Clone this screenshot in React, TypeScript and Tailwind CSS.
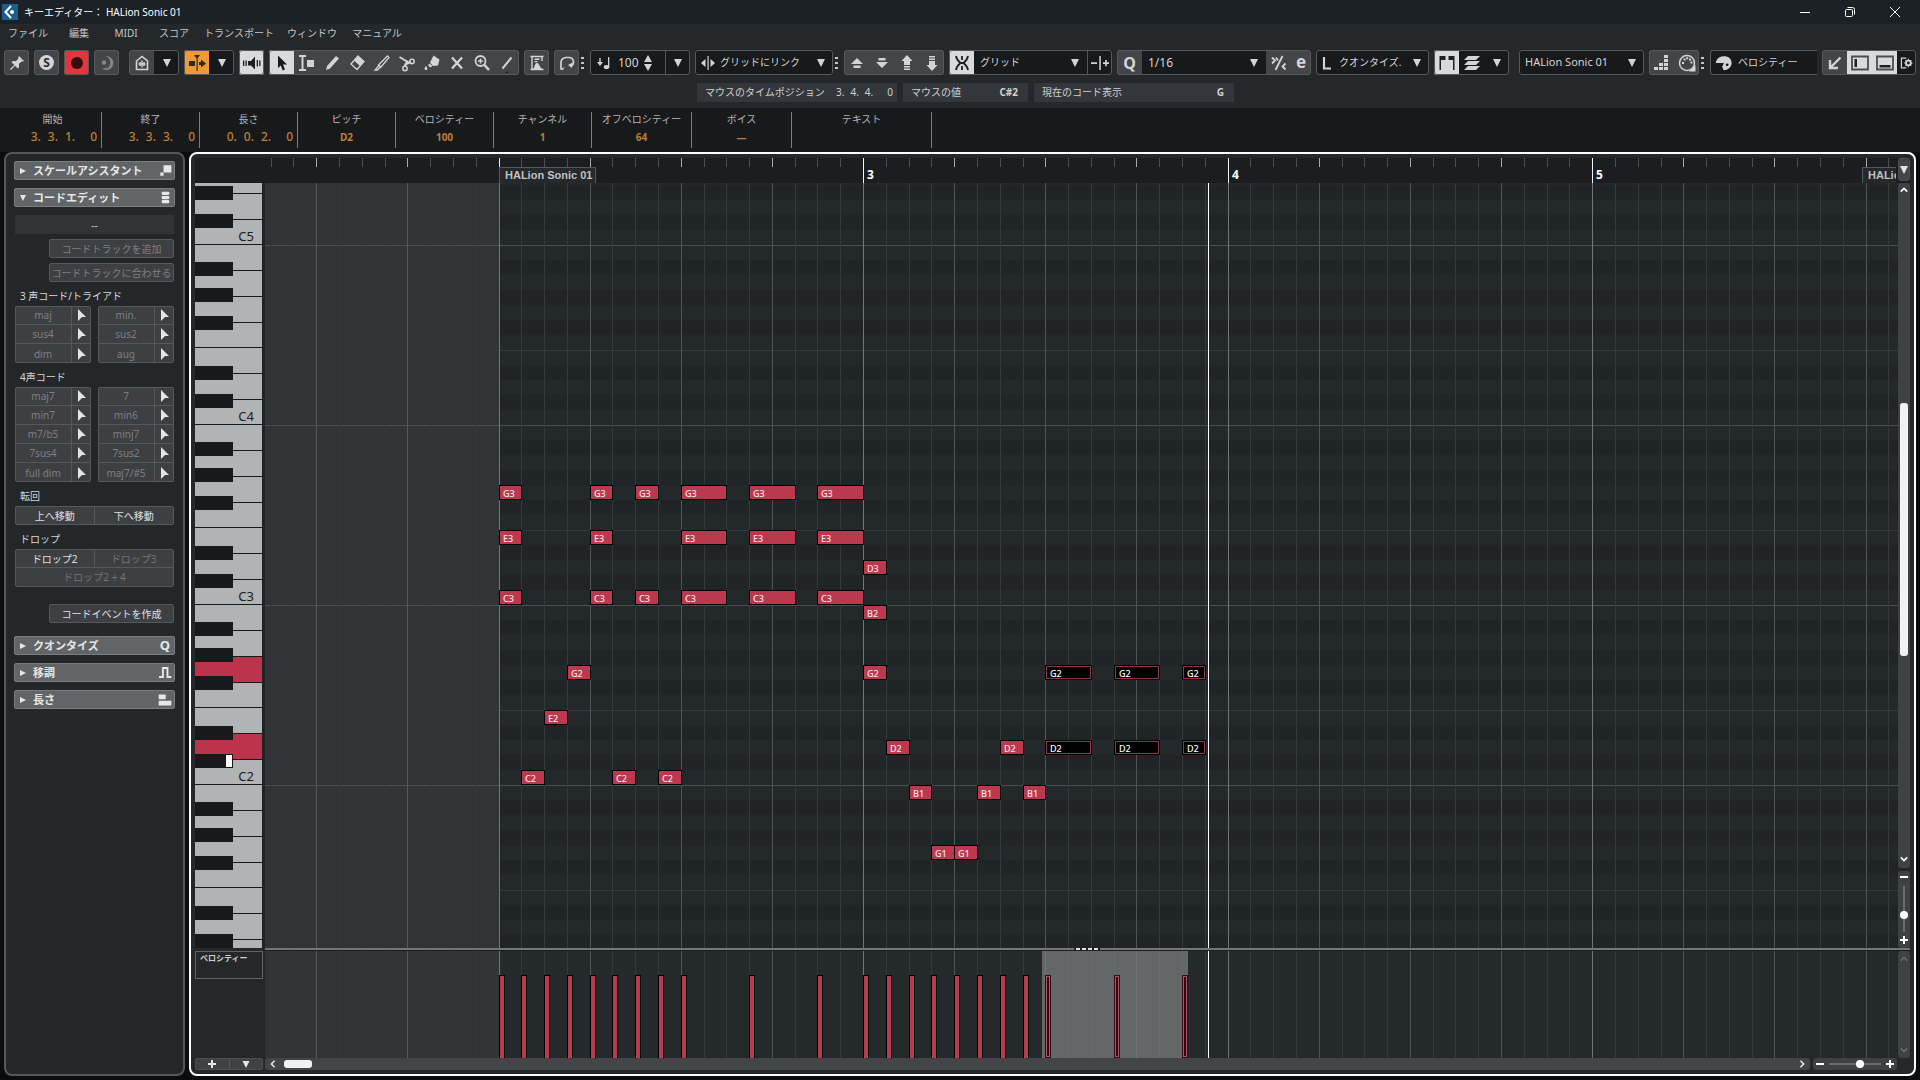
import React from 'react';
import clsx from 'clsx';

const STEP = 22.785; // width of a 1/16
const ORIGIN = 234; // where bar 2 starts on the canvas

const xAt = (step: number) => Math.floor(ORIGIN + STEP * step);

interface Note {
  name: string;
  pitch: number; // semitones above C3
  steps: number[];
  length: number;
  selected?: boolean;
}

const notes: Note[] = [
  { name: 'G3', pitch: 7, steps: [0, 4, 6], length: 1 },
  { name: 'G3', pitch: 7, steps: [8, 11, 14], length: 2 },
  { name: 'E3', pitch: 4, steps: [0, 4], length: 1 },
  { name: 'E3', pitch: 4, steps: [8, 11, 14], length: 2 },
  { name: 'C3', pitch: 0, steps: [0, 4, 6], length: 1 },
  { name: 'C3', pitch: 0, steps: [8, 11, 14], length: 2 },
  { name: 'D3', pitch: 2, steps: [16], length: 1 },
  { name: 'B2', pitch: -1, steps: [16], length: 1 },
  { name: 'G2', pitch: -5, steps: [3, 16], length: 1 },
  { name: 'E2', pitch: -8, steps: [2], length: 1 },
  { name: 'D2', pitch: -10, steps: [17, 22], length: 1 },
  { name: 'C2', pitch: -12, steps: [1, 5, 7], length: 1 },
  { name: 'B1', pitch: -13, steps: [18, 21, 23], length: 1 },
  { name: 'G1', pitch: -17, steps: [19, 20], length: 1 },
  { name: 'G2', pitch: -5, steps: [24, 27], length: 2, selected: true },
  { name: 'G2', pitch: -5, steps: [30], length: 1, selected: true },
  { name: 'D2', pitch: -10, steps: [24, 27], length: 2, selected: true },
  { name: 'D2', pitch: -10, steps: [30], length: 1, selected: true },
];

const velocities = [0, 1, 2, 3, 4, 5, 6, 7, 8, 11, 14, 16, 17, 18, 19, 20, 21, 22, 23];
const selectedVelocities = [24, 27, 30];

const menus = [
  { label: 'ファイル', width: 'w-[52px]' },
  { label: '編集', width: 'w-[50px]' },
  { label: 'MIDI', width: 'w-[44px]' },
  { label: 'スコア', width: 'w-[52px]' },
  { label: 'トランスポート', width: 'w-[78px]' },
  { label: 'ウィンドウ', width: 'w-[68px]' },
  { label: 'マニュアル', width: 'w-[62px]' },
];

const infoCells = [
  { label: '開始', time: ['3.', '3.', '1.', '0'], width: 'w-[98px]' },
  { label: '終了', time: ['3.', '3.', '3.', '0'], width: 'w-[98px]' },
  { label: '長さ', time: ['0.', '0.', '2.', '0'], width: 'w-[98px]' },
  { label: 'ピッチ', value: 'D2', width: 'w-[98px]' },
  { label: 'ベロシティー', value: '100', width: 'w-[98px]' },
  { label: 'チャンネル', value: '1', width: 'w-[98px]' },
  { label: 'オフベロシティー', value: '64', width: 'w-[100px]' },
  { label: 'ボイス', value: '—', width: 'w-[100px]' },
  { label: 'テキスト', value: '', width: 'w-[140px]' },
];

/* ---------- icons ---------- */

const Icon: React.FC<{ children: React.ReactNode; className?: string }> = ({ children, className = 'h-5 w-5' }) => (
  <svg viewBox="0 0 20 20" aria-hidden="true" className={clsx('shrink-0', className)} fill="currentColor">
    {children}
  </svg>
);

const line = { fill: 'none', stroke: 'currentColor', strokeWidth: 1.8 };

const PinIcon = () => (
  <Icon>
    <path d="M12 3l5 5-1.500.8-1-.3-2.600 2.600.2 3.200-1.300 1.200-2.800-2.800L4 17l-1-1 4.300-4-2.800-2.800 1.200-1.200 3.200.2 2.600-2.600-.3-1z" />
  </Icon>
);
const MoonIcon = () => (
  <Icon className="h-5 w-5 text-[#85878a]">
    <path d="M9 3a7 7 0 1 1-4 12.500A6.800 6.800 0 0 0 9 3z" />
    <circle cx="7" cy="9.500" r="2.200" />
    <path d="M9.500 4.500a6 6 0 0 1 0 10.500" fill="none" stroke="#46484b" strokeWidth="1.500" />
  </Icon>
);
const HouseIcon = () => (
  <Icon>
    <path d="M4.500 8L10 3.500 15.500 8v8.500h-11z" {...line} strokeWidth={1.600} />
    <path d="M10 7.500v7M6.500 11h7M8 9v4M12 9v4" {...line} strokeWidth={1.400} />
  </Icon>
);
const AutoScrollIcon = () => (
  <Icon className="h-5 w-5 text-[#2a2a2a]">
    <path d="M2 8h6v5H2zM9.500 5.500h1.200V18H9.500zM7 2h6l-3 4zM12 9h2V6.500l5 4-5 4V12h-2z" />
  </Icon>
);
const SpeakerIcon = () => (
  <Icon className="h-5 w-5 text-[#1d1f21]">
    <path d="M6 8h3l4-4.500v13L9 12.500H6zM1 7.500h1.300v5.500H1zM3.500 7.500h1.300v5.500H3.500zM14.700 7h1.300v6.500h-1.300zM17.200 7.500h1.300v5.500h-1.300z" />
  </Icon>
);
const CursorIcon = () => (
  <Icon>
    <path d="M6 2.500l9 9h-4l2 5-2.200.9-2-4.900L6 15z" />
  </Icon>
);
const RangeIcon = () => (
  <Icon>
    <path d="M2 3h7M2 17h7M5.500 3v14" {...line} strokeWidth={2} />
    <path d="M10 7h7v7h-7z" />
  </Icon>
);
const PencilIcon = () => (
  <Icon>
    <path d="M14 3l3 2.500L8 15.500 4 17l1-4z" />
  </Icon>
);
const EraserIcon = () => (
  <Icon>
    <path d="M11 3l6 5.500-7 8-6-5.500z" fill="none" stroke="currentColor" strokeWidth="1.300" />
    <path d="M11 3l6 5.500-4 4.500-6-5.500z" />
  </Icon>
);
const KnifeIcon = () => (
  <Icon>
    <path d="M15.500 3l1.500 1.500-8 9.500-2.500-2zM7 12.500l1.500 1.500-3 3H3z" {...line} strokeWidth={1.300} />
  </Icon>
);
const ScissorsIcon = () => (
  <Icon>
    <path d="M2.500 4l10 6M7.500 13.500l3-6" {...line} strokeWidth={2} />
    <circle cx="15" cy="8.500" r="2.200" {...line} strokeWidth={1.500} />
    <circle cx="8" cy="15.500" r="2.200" {...line} strokeWidth={1.500} />
    <path d="M9 11.500l5-2.500" {...line} />
  </Icon>
);
const GlueIcon = () => (
  <Icon>
    <path d="M11.500 2.500l6 4-1.500 6-5 .5-3-3.500zM7.500 10.500l3 2.500-2 1.500-2.500-2zM4 13c1.800 1.800 1.800 4 0 4s-1.800-2.200 0-4z" />
  </Icon>
);
const MuteIcon = () => (
  <Icon>
    <path d="M5 4.500l10 11M15 4.500l-10 11" {...line} strokeWidth={2.300} />
  </Icon>
);
const ZoomIcon = () => (
  <Icon>
    <circle cx="8.500" cy="8" r="5" {...line} />
    <path d="M12 11.500l5 5.500" {...line} strokeWidth={2.600} />
    <path d="M6 8h5M8.500 5.500v5" {...line} strokeWidth={1.400} />
  </Icon>
);
const LineIcon = () => (
  <Icon>
    <path d="M14.500 4.500l-9 11" {...line} strokeWidth={2} />
    <path d="M7.500 21l2.500-3 2.500 3z" fill="#1d1f21" />
  </Icon>
);
const StretchIcon = () => (
  <Icon>
    <path d="M3.500 3.500h13M3.500 16.500h13M5 3v14M15 3v5" {...line} strokeWidth={1.400} />
    <path d="M5 16.500C9 14 7 10 10 10s1.500 4 6 6.500zM7.500 5.500h5V7h-5zM7.500 8h3v1.200h-3z" />
  </Icon>
);
const LoopIcon = () => (
  <Icon>
    <path d="M4 16V9.500a5 5 0 0 1 5-5h3a4.500 4.500 0 0 1 2 8.500" {...line} strokeWidth={1.700} />
    <path d="M2.500 16.500l5-2.500-1.500 3zM15.500 9.500l-.5 5.500-4-3z" />
  </Icon>
);
const StepIcon: React.FC<{ d: string }> = ({ d }) => (
  <Icon>
    <path d={d} />
  </Icon>
);
const SnapIcon = () => (
  <Icon className="h-5 w-5 text-[#1d1f21]">
    <path d="M4 3c.5 3 2 5 4.500 7C6 12 4.500 14 4 17M16 3c-.5 3-2 5-4.500 7 2.500 2 4 4 4.500 7M10 3v4M10 13v4M7.500 10h5" {...line} />
  </Icon>
);
const VelocityIcon = () => (
  <Icon className="h-[18px] w-[18px]">
    <path d="M1 8.500C2.500 4.500 6 2.500 10 2.500c5 0 8.500 3 8.500 7.500s-4 8-9 8L8 14l2-4H1z" />
    <circle cx="13.500" cy="12" r="1.500" fill="#17191a" />
  </Icon>
);
const Arrow: React.FC<{ className?: string }> = ({ className = 'h-2 w-2' }) => (
  <svg viewBox="0 0 10 10" aria-hidden="true" className={clsx('shrink-0', className)} fill="currentColor">
    <path d="M0 0h10L5 10z" />
  </svg>
);
const Chevron: React.FC<{ d: string }> = ({ d }) => (
  <svg viewBox="0 0 10 10" aria-hidden="true" className="h-2 w-2" fill="none" stroke="currentColor" strokeWidth="2">
    <path d={d} />
  </svg>
);

/* ---------- toolbar ---------- */

interface ToolProps {
  label: string;
  children: React.ReactNode;
  className?: string;
  width?: string;
}

const Tool: React.FC<ToolProps> = ({ label, children, className, width = 'w-[25px]' }) => (
  <button
    aria-label={label}
    className={clsx('flex h-full shrink-0 items-center justify-center', width, className)}
  >
    {children}
  </button>
);

const Box: React.FC<{ children: React.ReactNode; className?: string }> = ({ children, className }) => (
  <div className={clsx('flex h-[25px] shrink-0 overflow-hidden rounded-[3px] outline outline-1 -outline-offset-1 outline-[#56585b]', className)}>
    {children}
  </div>
);

const Dropdown: React.FC<{ label: string; value: string; inset?: string }> = ({ label, value, inset = 'pl-[6px]' }) => (
  <div className="relative flex h-full min-w-0 flex-1 items-center">
    <select
      aria-label={label}
      defaultValue={value}
      className={clsx('h-full w-full appearance-none bg-transparent outline-none', inset)}
    >
      <option>{value}</option>
    </select>
    <Arrow className="pointer-events-none absolute right-2 h-2 w-2" />
  </div>
);

const Dots = () => (
  <div className="flex w-[3px] shrink-0 flex-col gap-[3px]">
    <i className="h-[2px] bg-[#c5c6c8]" />
    <i className="h-[2px] bg-[#c5c6c8]" />
    <i className="h-[2px] bg-[#c5c6c8]" />
  </div>
);

const Toolbar = () => (
  <div className="flex h-[25px] items-center gap-[5px] pl-1 text-[12px] text-[#d3d4d5]">
    <Box className="bg-[#434548]"><Tool label="固定"><PinIcon /></Tool></Box>
    <Box className="bg-[#434548]">
      <Tool label="ソロ">
        <span className="flex h-[15px] w-[15px] items-center justify-center rounded-full bg-[#d3d4d5] text-[12px] font-bold text-[#2b2d2f]">S</span>
      </Tool>
    </Box>
    <Box className="bg-[#e2353d]">
      <Tool label="録音"><span className="h-3 w-3 rounded-full bg-[#350d10]" /></Tool>
    </Box>
    <Box className="bg-[#434548]"><Tool label="レトロスペクティブ"><MoonIcon /></Tool></Box>
    <Box className="ml-[5px] bg-[#17191a]">
      <Tool label="エディター" className="bg-[#434548]"><HouseIcon /></Tool>
      <Tool label="エディター設定"><Arrow /></Tool>
    </Box>
    <Box className="bg-[#17191a]">
      <Tool label="自動スクロール" className="bg-[#ef9a35]"><AutoScrollIcon /></Tool>
      <Tool label="自動スクロール設定"><Arrow /></Tool>
    </Box>
    <Box className="bg-[#d9dadb]"><Tool label="試聴"><SpeakerIcon /></Tool></Box>
    <Box className="bg-[#434548]">
      <Tool label="選択" className="bg-[#d9dadb] text-[#17191a]"><CursorIcon /></Tool>
      <Tool label="範囲"><RangeIcon /></Tool>
      <Tool label="鉛筆"><PencilIcon /></Tool>
      <Tool label="消しゴム"><EraserIcon /></Tool>
      <Tool label="トリム"><KnifeIcon /></Tool>
      <Tool label="分割"><ScissorsIcon /></Tool>
      <Tool label="のり"><GlueIcon /></Tool>
      <Tool label="ミュート"><MuteIcon /></Tool>
      <Tool label="ズーム"><ZoomIcon /></Tool>
      <Tool label="ライン"><LineIcon /></Tool>
    </Box>
    <Box className="bg-[#434548]"><Tool label="伸縮"><StretchIcon /></Tool></Box>
    <Box className="-mr-[3px] bg-[#434548]"><Tool label="ループ"><LoopIcon /></Tool></Box>
    <Dots />
    <Box className="ml-[1px] w-[100px] items-center bg-[#17191a]">
      <Icon className="ml-1 h-5 w-5">
        <path d="M3 9h6l-3 4zM5.300 5h1.400v5H5.300zM14 4h1.300v10H14z" />
        <ellipse cx="12.500" cy="14" rx="2.800" ry="2" />
      </Icon>
      <input aria-label="ベロシティー値" defaultValue="100" className="ml-1 w-[26px] bg-transparent outline-none" />
      <svg viewBox="0 0 8 16" aria-hidden="true" className="h-4 w-2" fill="currentColor"><path d="M0 7l4-7 4 7zM0 9h8l-4 7z" /></svg>
      <Tool label="ベロシティー設定" className="ml-auto border-l border-[#56585b]"><Arrow /></Tool>
    </Box>
    <Box className="-mr-[3px] w-[138px] items-center bg-[#17191a] text-[10px]">
      <Icon className="ml-[3px] h-5 w-5"><path d="M9.500 3h1.200v14H9.500zM7.500 6v8L3 10zM12.500 6v8l4.500-4z" /></Icon>
      <Dropdown label="長さ" value="グリッドにリンク" inset="pl-[2px]" />
    </Box>
    <Dots />
    <Box className="ml-[1px] bg-[#434548]">
      <Tool label="上へ"><StepIcon d="M10 5l6 6H4zM6.500 12.500h7V15h-7z" /></Tool>
      <Tool label="下へ"><StepIcon d="M4 9h12l-6 6zM6.500 5h7v2.500h-7z" /></Tool>
      <Tool label="1 オクターブ上へ"><StepIcon d="M10 2l5.500 6H13v4H7V8H4.500zM7 13h6v1.500H7zM7 15.500h6V17H7z" /></Tool>
      <Tool label="1 オクターブ下へ"><StepIcon d="M10 18l5.500-6H13V8H7v4H4.500zM7 5.500h6V7H7zM7 3h6v1.500H7z" /></Tool>
    </Box>
    <Box className="w-[163px] bg-[#17191a] text-[10px]">
      <Tool label="スナップ" className="bg-[#d9dadb]"><SnapIcon /></Tool>
      <Dropdown label="スナップタイプ" value="グリッド" />
      <Tool label="相対グリッド" className="border-l border-[#56585b]">
        <Icon><path d="M1 9.300h6v1.600H1zM9.300 3h1.500v14H9.300zM13 9.300h6v1.600h-6zM15.200 7h1.600v6.200h-1.600z" /></Icon>
      </Tool>
    </Box>
    <Box className="w-[194px] bg-[#17191a]">
      <Tool label="クオンタイズを適用" className="bg-[#434548] text-[16px] font-bold">Q</Tool>
      <Dropdown label="クオンタイズ値" value="1/16" />
      <Tool label="ソフトクオンタイズ" className="bg-[#434548]">
        <Icon>
          <path d="M13.500 3l-7 14M3 4.500L6 7.500l-3 3M7 4.500l2 3M16.500 10.500l-3 3 3 3" {...line} />
        </Icon>
      </Tool>
      <Tool label="クオンタイズパネル" width="w-[20px]" className="bg-[#434548] pb-[2px] text-[17px] font-bold">e</Tool>
    </Box>
    <Box className="w-[113px] items-center bg-[#17191a] text-[10px]">
      <Icon className="ml-[1px] h-5 w-[22px]"><path d="M6 4v11.500h7" {...line} strokeWidth={2.200} /></Icon>
      <Dropdown label="長さクオンタイズ" value="クオンタイズ." inset="pl-0" />
    </Box>
    <Box className="bg-[#17191a]">
      <Tool label="パート境界" className="bg-[#d9dadb] text-[#1d1f21]">
        <Icon><path d="M2.500 3h6v4H4v10H2.500zM11.500 3h6v14H16V7h-4.500z" /></Icon>
      </Tool>
      <Tool label="レイヤー">
        <Icon><path d="M6 3h12l-4 4H2zM6 8h12l-4 4H2zM6 13h12l-4 4H2z" /></Icon>
      </Tool>
      <Tool label="レイヤー設定"><Arrow /></Tool>
    </Box>
    <Box className="ml-[5px] w-[125px] bg-[#17191a] text-[11px]"><Dropdown label="パート" value="HALion Sonic 01" /></Box>
    <Box className="-mr-[3px] bg-[#434548]">
      <Tool label="ステップ入力">
        <Icon><path d="M2 14h4v3H2zM7 14h4v3H7zM12 14h4v3h-4zM7 10h4v3H7zM12 10h4v3h-4zM12 6h4v3h-4zM12 2h4v3h-4z" /></Icon>
      </Tool>
      <Tool label="MIDI 入力">
        <Icon>
          <circle cx="10" cy="10" r="7.500" {...line} strokeWidth={1.500} />
          <path d="M5 9h2v2H5zM6.500 5.500h2v2h-2zM9.200 4.300h2v2h-2zM12 5.500h2v2h-2zM13.500 8.500h2v2h-2zM18.500 12v6.500H12z" />
        </Icon>
      </Tool>
    </Box>
    <Dots />
    <button className="ml-[1px] flex h-[25px] w-[107px] shrink-0 items-center gap-[5px] rounded-l-[3px] border-y border-l border-[#56585b] bg-[#17191a] pl-1 text-[10px] whitespace-nowrap">
      <VelocityIcon />
      ベロシティー
    </button>
    <Box className="bg-[#17191a]">
      <Tool label="プロジェクトウィンドウに戻る" className="bg-[#434548]">
        <Icon><path d="M15.500 4.500L6 14M5 7v8h8" {...line} strokeWidth={2.400} /></Icon>
      </Tool>
      <Tool label="左ゾーン" className="bg-[#d9dadb] text-[#4b4d50]">
        <Icon><path d="M2 3.500h16v13H2z" {...line} /><path d="M4.500 6H7v8H4.500z" fill="#1d1f21" /></Icon>
      </Tool>
      <Tool label="下ゾーン" className="bg-[#d9dadb] text-[#4b4d50]">
        <Icon><path d="M2 3.500h16v13H2z" {...line} /><path d="M4.500 12h11v2.500h-11z" fill="#1d1f21" /></Icon>
      </Tool>
      <Tool label="レイアウト設定" width="w-[19px]">
        <Icon className="h-[14px] w-[14px]">
          <path d="M9 3H2v14h7" {...line} />
          <circle cx="12" cy="10" r="3.500" {...line} strokeWidth={2.500} />
          <path d="M12 4v12M6 10h12M8 6l8 8M16 6l-8 8" stroke="currentColor" strokeWidth="1.600" />
          <circle cx="12" cy="10" r="2" fill="#17191a" />
        </Icon>
      </Tool>
    </Box>
  </div>
);

/* ---------- left inspector ---------- */

const SectionHeader: React.FC<{ title: string; open?: boolean; children: React.ReactNode }> = ({ title, open, children }) => (
  <button
    aria-expanded={!!open}
    className="flex h-[19px] w-full items-center rounded-[2px] border border-[#7b7e80] bg-[#626567] pr-[2px] pl-[5px] text-[11px] font-bold text-[#e6e7e8]"
  >
    <Arrow className={clsx('h-[6px] w-[6px]', !open && '-rotate-90')} />
    <span className="ml-[7px]">{title}</span>
    <span className="ml-auto flex">{children}</span>
  </button>
);

const chordButton = 'border border-[#56585a] bg-[#3d3f42]';

const ChordColumn: React.FC<{ chords: string[] }> = ({ chords }) => (
  <div className="flex w-[76px] flex-col divide-y divide-[#56585a] rounded-[2px] bg-[#3d3f42] outline outline-1 -outline-offset-1 outline-[#56585a]">
    {chords.map((chord) => (
      <div key={chord} className="flex h-[19px] divide-x divide-[#56585a]">
        <button className="flex-1 text-[#7d7f82]">{chord}</button>
        <button aria-label={`${chord} を適用`} className="flex w-[19px] items-center justify-center text-[#e4e5e6]">
          <svg viewBox="0 0 9 12" aria-hidden="true" className="h-3 w-[9px]" fill="currentColor">
            <path d="M1 0l8 8H5l-4 4z" />
          </svg>
        </button>
      </div>
    ))}
  </div>
);

const GroupLabel: React.FC<{ children: React.ReactNode }> = ({ children }) => (
  <h3 className="flex h-6 items-center pt-[3px] pl-[5px] text-[#d6d7d8]">{children}</h3>
);

const Inspector = () => (
  <aside className="flex w-[181px] shrink-0 flex-col rounded-lg border-2 border-[#55585a] bg-[#23272a] px-2 pt-[7px] text-[10px] leading-none">
    <SectionHeader title="スケールアシスタント">
      <Icon className="h-[13px] w-[13px]"><path d="M7 2h12v11H7zM2 13h5v5H2z" /></Icon>
    </SectionHeader>
    <div className="h-2" />
    <SectionHeader title="コードエディット" open>
      <Icon className="h-[13px] w-[13px]">
        <rect x="4" y="1" width="12" height="5" rx="2" />
        <rect x="4" y="7.500" width="12" height="5" rx="2" />
        <rect x="4" y="14" width="12" height="5" rx="2" />
      </Icon>
    </SectionHeader>
    <div className="flex flex-col px-[1px] pt-2 pb-[13px]">
      <div className="flex h-[19px] items-center justify-center bg-[#313336] text-[#d6d7d8]">--</div>
      <button className={clsx(chordButton, 'mt-[5px] ml-[34px] h-[19px] rounded-[2px] text-[#7d7f82]')}>コードトラックを追加</button>
      <button className={clsx(chordButton, 'mt-[5px] ml-[34px] h-[19px] rounded-[2px] text-[#7d7f82]')}>コードトラックに合わせる</button>
      <GroupLabel>3 声コード/トライアド</GroupLabel>
      <div className="flex justify-between">
        <ChordColumn chords={['maj', 'sus4', 'dim']} />
        <ChordColumn chords={['min.', 'sus2', 'aug']} />
      </div>
      <GroupLabel>4声コード</GroupLabel>
      <div className="flex justify-between">
        <ChordColumn chords={['maj7', 'min7', 'm7/b5', '7sus4', 'full dim']} />
        <ChordColumn chords={['7', 'min6', 'minj7', '7sus2', 'maj7/#5']} />
      </div>
      <GroupLabel>転回</GroupLabel>
      <div className="grid h-[19px] grid-cols-2 divide-x divide-[#56585a] rounded-[2px] border border-[#56585a] bg-[#3d3f42] text-[#e0e1e2]">
        <button>上へ移動</button>
        <button>下へ移動</button>
      </div>
      <GroupLabel>ドロップ</GroupLabel>
      <div className="rounded-[2px] border border-[#56585a] bg-[#3d3f42]">
        <div className="grid h-[18px] grid-cols-2 divide-x divide-[#56585a] border-b border-[#56585a]">
          <button className="text-[#e0e1e2]">ドロップ2</button>
          <button className="text-[#727477]">ドロップ3</button>
        </div>
        <button className="h-[18px] w-full text-[#727477]">ドロップ2 + 4</button>
      </div>
      <button className={clsx(chordButton, 'mt-[17px] ml-[34px] h-[19px] rounded-[2px] text-[#e0e1e2]')}>コードイベントを作成</button>
    </div>
    <div className="flex flex-col gap-2">
      <SectionHeader title="クオンタイズ"><span className="pr-[2px] text-[13px]">Q</span></SectionHeader>
      <SectionHeader title="移調">
        <Icon className="h-[13px] w-[13px]"><path d="M0 17h6V3h7v14h6" {...line} strokeWidth={3} /></Icon>
      </SectionHeader>
      <SectionHeader title="長さ">
        <Icon className="h-[14px] w-[14px]"><path d="M1 2h10v7H1zM1 11h18v7H1z" /></Icon>
      </SectionHeader>
    </div>
  </aside>
);

/* ---------- keyboard ---------- */

const whiteKeys = [
  { name: 'B', height: 'h-[26px]' },
  { name: 'A', height: 'h-[26px]' },
  { name: 'G', height: 'h-[26px]' },
  { name: 'F', height: 'h-[25px]' },
  { name: 'E', height: 'h-[26px]' },
  { name: 'D', height: 'h-[26px]' },
  { name: 'C', height: 'h-[25px]' },
];
const blackKeys = ['top-[17px]', 'top-[43px]', 'top-[71px]', 'top-[121px]', 'top-[149px]'];

const Octave: React.FC<{ label?: string; pressed?: string[] }> = ({ label, pressed = [] }) => (
  <div className="relative shrink-0">
    {whiteKeys.map((key) => (
      <div
        key={key.name}
        className={clsx(
          'flex items-end justify-end border-b border-[#17191a] pr-2 text-[13px] leading-[16px] text-[#1b1c1d]',
          key.height,
          pressed.includes(key.name) ? 'bg-[#bb344c]' : 'bg-[#b2b3b5]',
        )}
      >
        {key.name === 'C' && label}
      </div>
    ))}
    {blackKeys.map((top) => (
      <div key={top} className={clsx('absolute left-0 h-[14px] w-[38px] bg-[#17191a]', top)} />
    ))}
    {pressed.length > 0 && <div className="absolute top-[150px] left-[31px] h-3 w-[6px] bg-white" />}
  </div>
);

const Keyboard = () => (
  <div className="h-full w-[67px] shrink-0 overflow-hidden">
    <div className="-mt-[118px] flex flex-col">
      <Octave label="C5" />
      <Octave label="C4" />
      <Octave label="C3" />
      <Octave label="C2" pressed={['G', 'D']} />
      <Octave />
    </div>
  </div>
);

/* ---------- canvas ---------- */

const steps = Array.from({ length: 160 }, (_, i) => i - 10);

const stepColor = (step: number) => {
  if (step < 0) return step % 4 === 0 ? '#56585a' : '#353639';
  if (step % 16 === 0) return '#727678';
  return step % 4 === 0 ? '#505456' : '#34393b';
};

const GridLines = () => (
  <g shapeRendering="crispEdges">
    {steps.map((step) => (
      <rect key={step} x={xAt(step)} y={0} width={1} height="100%" fill={stepColor(step)} />
    ))}
  </g>
);

const darkRows = [1, 3, 5, 8, 10]; // A#, G#, F#, D#, C# counted from B

const RollGrid = () => (
  <svg aria-hidden="true" className="absolute inset-0 h-full w-full bg-[#23282b]">
    {[-118, 62, 242, 422, 602].map((top) => (
      <g key={top} shapeRendering="crispEdges">
        {darkRows.map((row) => (
          <rect key={row} x={0} y={top + row * 15} width="100%" height={15} fill="#202427" />
        ))}
        <rect x={0} y={top + 105} width="100%" height={1} fill="#33383a" />
      </g>
    ))}
    <rect x={0} y={0} width={ORIGIN} height="100%" fill="#323336" />
    {[62, 242, 422, 602].map((y) => (
      <rect key={y} x={0} y={y} width="100%" height={1} fill="#4a4e50" />
    ))}
    <GridLines />
  </svg>
);

const Notes = () => (
  <>
    {notes.flatMap((note) =>
      note.steps.map((step) => (
        <div
          key={`${note.name}-${step}`}
          className={clsx(
            'absolute flex h-[15px] items-center border border-black text-[9px] leading-none font-medium',
            note.selected ? 'bg-black text-white' : 'bg-[#bb384f] text-[#f7e6e8]',
          )}
          style={{
            left: xAt(step),
            top: 407 - note.pitch * 15,
            width: xAt(step + note.length) - xAt(step) + 1,
          }}
        >
          <span className={clsx('flex h-full w-full items-center pt-[1px] pl-[3px]', note.selected && 'border border-[#8a3a47]')}>
            {note.name}
          </span>
        </div>
      )),
    )}
  </>
);

const Playhead = () => <div className="absolute inset-y-0 left-[943px] w-px bg-white" />;

const partLabel =
  "absolute top-[9px] h-4 border-[#55585a] bg-[#26292b] pl-[5px] text-[11px] leading-[15px] font-bold whitespace-nowrap text-[#bfc0c2] [font-family:'Liberation_Sans',sans-serif]";

const Ruler = () => (
  <div className="relative h-full min-w-0 flex-1 overflow-hidden">
    <svg aria-hidden="true" className="absolute inset-0 h-full w-full" shapeRendering="crispEdges">
      {steps.map((step) => {
        const bar = step >= 0 && step % 16 === 0;
        return (
          <rect
            key={step}
            x={xAt(step)}
            y={0}
            width={1}
            height={bar ? 25 : 9}
            fill={bar ? '#f2f2f2' : step % 4 === 0 ? '#a9abad' : '#4d5052'}
          />
        );
      })}
    </svg>
    {[3, 4, 5].map((bar) => (
      <span
        key={bar}
        className="absolute top-[9px] text-[12px] leading-4 font-bold text-white"
        style={{ left: xAt((bar - 2) * 16) + 4 }}
      >
        {bar}
      </span>
    ))}
    <div className={clsx(partLabel, 'left-[234px] w-[97px] border-x border-t')}>HALion Sonic 01</div>
    <div className={clsx(partLabel, 'right-[2px] w-[34px] overflow-hidden border-t border-l')}>HALion Sonic 01</div>
  </div>
);

const VelocityLane = () => (
  <div className="relative h-full min-w-0 flex-1 overflow-hidden">
    <svg aria-hidden="true" className="absolute inset-0 h-full w-full bg-[#24292b]">
      <rect x={0} y={0} width={ORIGIN} height="100%" fill="#323336" />
      <GridLines />
    </svg>
    <div className="absolute inset-y-0 left-[777px] w-[146px] bg-[#7f8182]/70" />
    {velocities.map((step) => (
      <div key={step} className="absolute top-6 bottom-0 w-[6px] border-x border-t border-black bg-[#b53c4f]" style={{ left: xAt(step) }} />
    ))}
    {selectedVelocities.map((step) => (
      <div key={step} className="absolute top-6 bottom-0 w-[6px] border border-[#3a0d16] bg-[#3a0510]" style={{ left: xAt(step) }}>
        <div className="h-full border border-[#a85564]" />
      </div>
    ))}
    <Playhead />
  </div>
);

const thumb =
  '[&::-webkit-slider-thumb]:h-2 [&::-webkit-slider-thumb]:w-2 [&::-webkit-slider-thumb]:appearance-none [&::-webkit-slider-thumb]:rounded-full [&::-webkit-slider-thumb]:bg-white';

const Plus = () => (
  <svg viewBox="0 0 8 8" aria-hidden="true" className="h-2 w-2" fill="currentColor"><path d="M3 0h2v3h3v2H5v3H3V5H0V3h3z" /></svg>
);
const Minus = () => (
  <svg viewBox="0 0 8 8" aria-hidden="true" className="h-2 w-2" fill="currentColor"><path d="M0 3h8v2H0z" /></svg>
);

const Editor = () => (
  <main className="flex min-w-0 flex-1 flex-col rounded-lg border-2 border-white bg-[#24282a] p-1">
    <div className="flex h-[25px] shrink-0 bg-[#1c1d21]">
      <div className="w-[70px] shrink-0" />
      <Ruler />
      <button aria-label="ルーラー設定" className="flex h-[23px] w-3 shrink-0 items-center justify-center rounded-[3px] border border-[#4d5052] bg-[#434548] text-[#e4e5e6]">
        <Arrow />
      </button>
    </div>

    <div className="flex min-h-0 flex-1">
      <Keyboard />
      <div className="w-[3px] shrink-0 bg-[#202326]" />
      <div className="relative h-full min-w-0 flex-1 overflow-hidden">
        <RollGrid />
        <Notes />
        <Playhead />
      </div>
      <div className="flex w-3 shrink-0 flex-col gap-[3px]">
        <div className="flex min-h-0 flex-1 flex-col items-center rounded-[3px] bg-[#3f4245]">
          <button aria-label="上へスクロール" className="flex h-[14px] items-center text-white"><Chevron d="M1 7l4-4 4 4" /></button>
          <div className="flex min-h-0 flex-1 flex-col">
            <div className="flex-[207]" />
            <div className="w-2 flex-[255] rounded-[3px] bg-[#f1f2f3]" />
            <div className="flex-[195]" />
          </div>
          <button aria-label="下へスクロール" className="flex h-[18px] items-center text-white"><Chevron d="M1 3l4 4 4-4" /></button>
        </div>
        <div className="flex h-[77px] shrink-0 flex-col items-center justify-between rounded-[3px] bg-[#3f4245] pt-[2px] pb-1 text-white">
          <button aria-label="縦に縮小" className="flex"><Minus /></button>
          <input
            type="range"
            aria-label="縦ズーム"
            defaultValue={68}
            className={clsx('h-[46px] w-2 appearance-none bg-[linear-gradient(#6a6d6f,#6a6d6f)] bg-[length:2px_100%] bg-center bg-no-repeat [writing-mode:vertical-lr]', thumb)}
          />
          <button aria-label="縦に拡大" className="flex"><Plus /></button>
        </div>
      </div>
    </div>

    <div className="flex h-[3px] shrink-0">
      <div className="w-[70px] shrink-0" />
      <div className="relative flex-1 border-b border-[#1c1f21] bg-[#747779]">
        <div className="absolute top-0 left-[809px] flex h-[2px] w-[26px] justify-center gap-[2px] bg-[#1c1f21]">
          {[0, 1, 2, 3].map((i) => <i key={i} className="w-1 bg-[#e4e5e6]" />)}
        </div>
      </div>
    </div>

    <div className="flex h-[107px] shrink-0">
      <div className="w-[70px] shrink-0 pr-[2px]">
        <div className="h-7 border border-[#606365] bg-[#24282b] pt-[2px] pl-1 text-[8px] leading-none font-bold whitespace-nowrap text-[#cfd0d1]">
          ベロシティー
        </div>
      </div>
      <VelocityLane />
      <div className="flex w-3 shrink-0 flex-col items-center justify-between rounded-[3px] bg-[#3f4245] py-1 text-[#6a6d6f]">
        <Chevron d="M1 7l4-4 4 4" />
        <Chevron d="M1 3l4 4 4-4" />
      </div>
    </div>

    <div className="flex h-3 shrink-0 text-[#e4e5e6]">
      <div className="mr-[2px] flex w-[68px] shrink-0 divide-x divide-[#56585a] rounded-[2px] border border-[#4d5052] bg-[#3f4245]">
        <button aria-label="レーンを追加" className="flex flex-1 items-center justify-center"><Plus /></button>
        <button aria-label="レーン設定" className="flex flex-1 items-center justify-center"><Arrow className="h-[7px] w-2" /></button>
      </div>
      <div className="flex min-w-0 flex-1 items-center rounded-[3px] bg-[#434548] px-1">
        <button aria-label="左へスクロール"><Chevron d="M7 1L3 5l4 4" /></button>
        <div className="ml-[7px] h-2 w-7 rounded-[3px] bg-[#f1f2f3]" />
        <button aria-label="右へスクロール" className="ml-auto"><Chevron d="M3 1l4 4-4 4" /></button>
      </div>
      <div className="mr-[13px] ml-[3px] flex w-[84px] shrink-0 items-center justify-between rounded-[3px] bg-[#3f4245] px-[3px] text-white">
        <button aria-label="横に縮小"><Minus /></button>
        <input
          type="range"
          aria-label="横ズーム"
          defaultValue={62}
          className={clsx('h-2 w-[52px] appearance-none bg-[linear-gradient(#6a6d6f,#6a6d6f)] bg-[length:100%_2px] bg-center bg-no-repeat', thumb)}
        />
        <button aria-label="横に拡大"><Plus /></button>
      </div>
    </div>
  </main>
);

const TimeValue: React.FC<{ parts: string[]; className?: string }> = ({ parts, className }) => (
  <span className={clsx('flex', className)}>
    {parts.map((part, index) => (
      <span key={index} className={clsx(index === parts.length - 1 && 'ml-2')}>{part}</span>
    ))}
  </span>
);

const App: React.FC = () => (
  <div className="flex h-screen flex-col overflow-hidden bg-[#0b0c0d] [font-family:'Noto_Sans','Noto_Sans_CJK_JP',sans-serif]">
    <header className="shrink-0 bg-[#24282b]">
      <div className="flex h-6 items-center bg-[#1b2126] pr-[19px] pl-[2px] text-white">
        <svg viewBox="0 0 16 16" aria-hidden="true" className="h-4 w-4">
          <rect width="16" height="16" fill="#1d5f8c" />
          <path d="M9 2L3.500 8 9 14" fill="none" stroke="#fff" strokeWidth="2" />
          <circle cx="10" cy="8" r="2" fill="#fff" />
        </svg>
        <h1 className="ml-[6px] text-[10px] whitespace-pre">キーエディター： HALion Sonic 01</h1>
        <div className="ml-auto flex gap-[33px]">
          <button aria-label="最小化"><svg viewBox="0 0 12 12" className="h-3 w-3" fill="none" stroke="currentColor"><path d="M1 6.500h10" /></svg></button>
          <button aria-label="元に戻す">
            <svg viewBox="0 0 12 12" className="h-3 w-3" fill="none" stroke="currentColor">
              <rect x="1.500" y="3.500" width="7" height="7" rx="1" />
              <path d="M3.500 1.500h5a2 2 0 0 1 2 2v5" />
            </svg>
          </button>
          <button aria-label="閉じる"><svg viewBox="0 0 12 12" className="h-3 w-3" fill="none" stroke="currentColor"><path d="M1 1l10 10M11 1L1 11" /></svg></button>
        </div>
      </div>
      <nav className="flex h-[26px] items-center pb-2 pl-[2px] text-[10px] text-[#c3c4c6]">
        {menus.map((menu) => (
          <button key={menu.label} className={clsx('whitespace-nowrap', menu.width)}>{menu.label}</button>
        ))}
      </nav>
      <Toolbar />
      <div className="flex h-[33px] items-center justify-center gap-[6px] pt-[2px] pl-[11px] text-[10px] text-[#d0d1d2]">
        <div className="flex h-[19px] w-[200px] items-center justify-between bg-[#33363a] pr-1 pl-2">
          <span>マウスのタイムポジション</span>
          <TimeValue parts={['3.', '4.', '4.', '0']} className="gap-[6px]" />
        </div>
        <div className="flex h-[19px] w-[125px] items-center justify-between bg-[#33363a] pr-[10px] pl-2">
          <span>マウスの値</span>
          <b>C#2</b>
        </div>
        <div className="flex h-[19px] w-[200px] items-center justify-between bg-[#33363a] pr-[10px] pl-2">
          <span>現在のコード表示</span>
          <b>G</b>
        </div>
      </div>
    </header>

    <dl className="flex h-11 shrink-0 bg-[#17191a] py-1 pl-1">
      {infoCells.map((cell) => (
        <div key={cell.label} className={clsx('flex h-9 flex-col border-r border-[#7a7c7e] text-center', cell.width)}>
          <dt className="pt-[1px] text-[10px] leading-3 whitespace-nowrap text-[#b4b5b7]">{cell.label}</dt>
          <dd className="mt-[5px] text-[10px] leading-[14px] font-bold text-[#c07f33]">
            {cell.time ? (
              <TimeValue parts={cell.time} className="justify-end gap-[7px] pr-1 text-[12px] font-medium" />
            ) : (
              cell.value
            )}
          </dd>
        </div>
      ))}
    </dl>

    <div className="flex min-h-0 flex-1 gap-1 px-1 pb-1">
      <Inspector />
      <Editor />
    </div>
  </div>
);

export default App;
